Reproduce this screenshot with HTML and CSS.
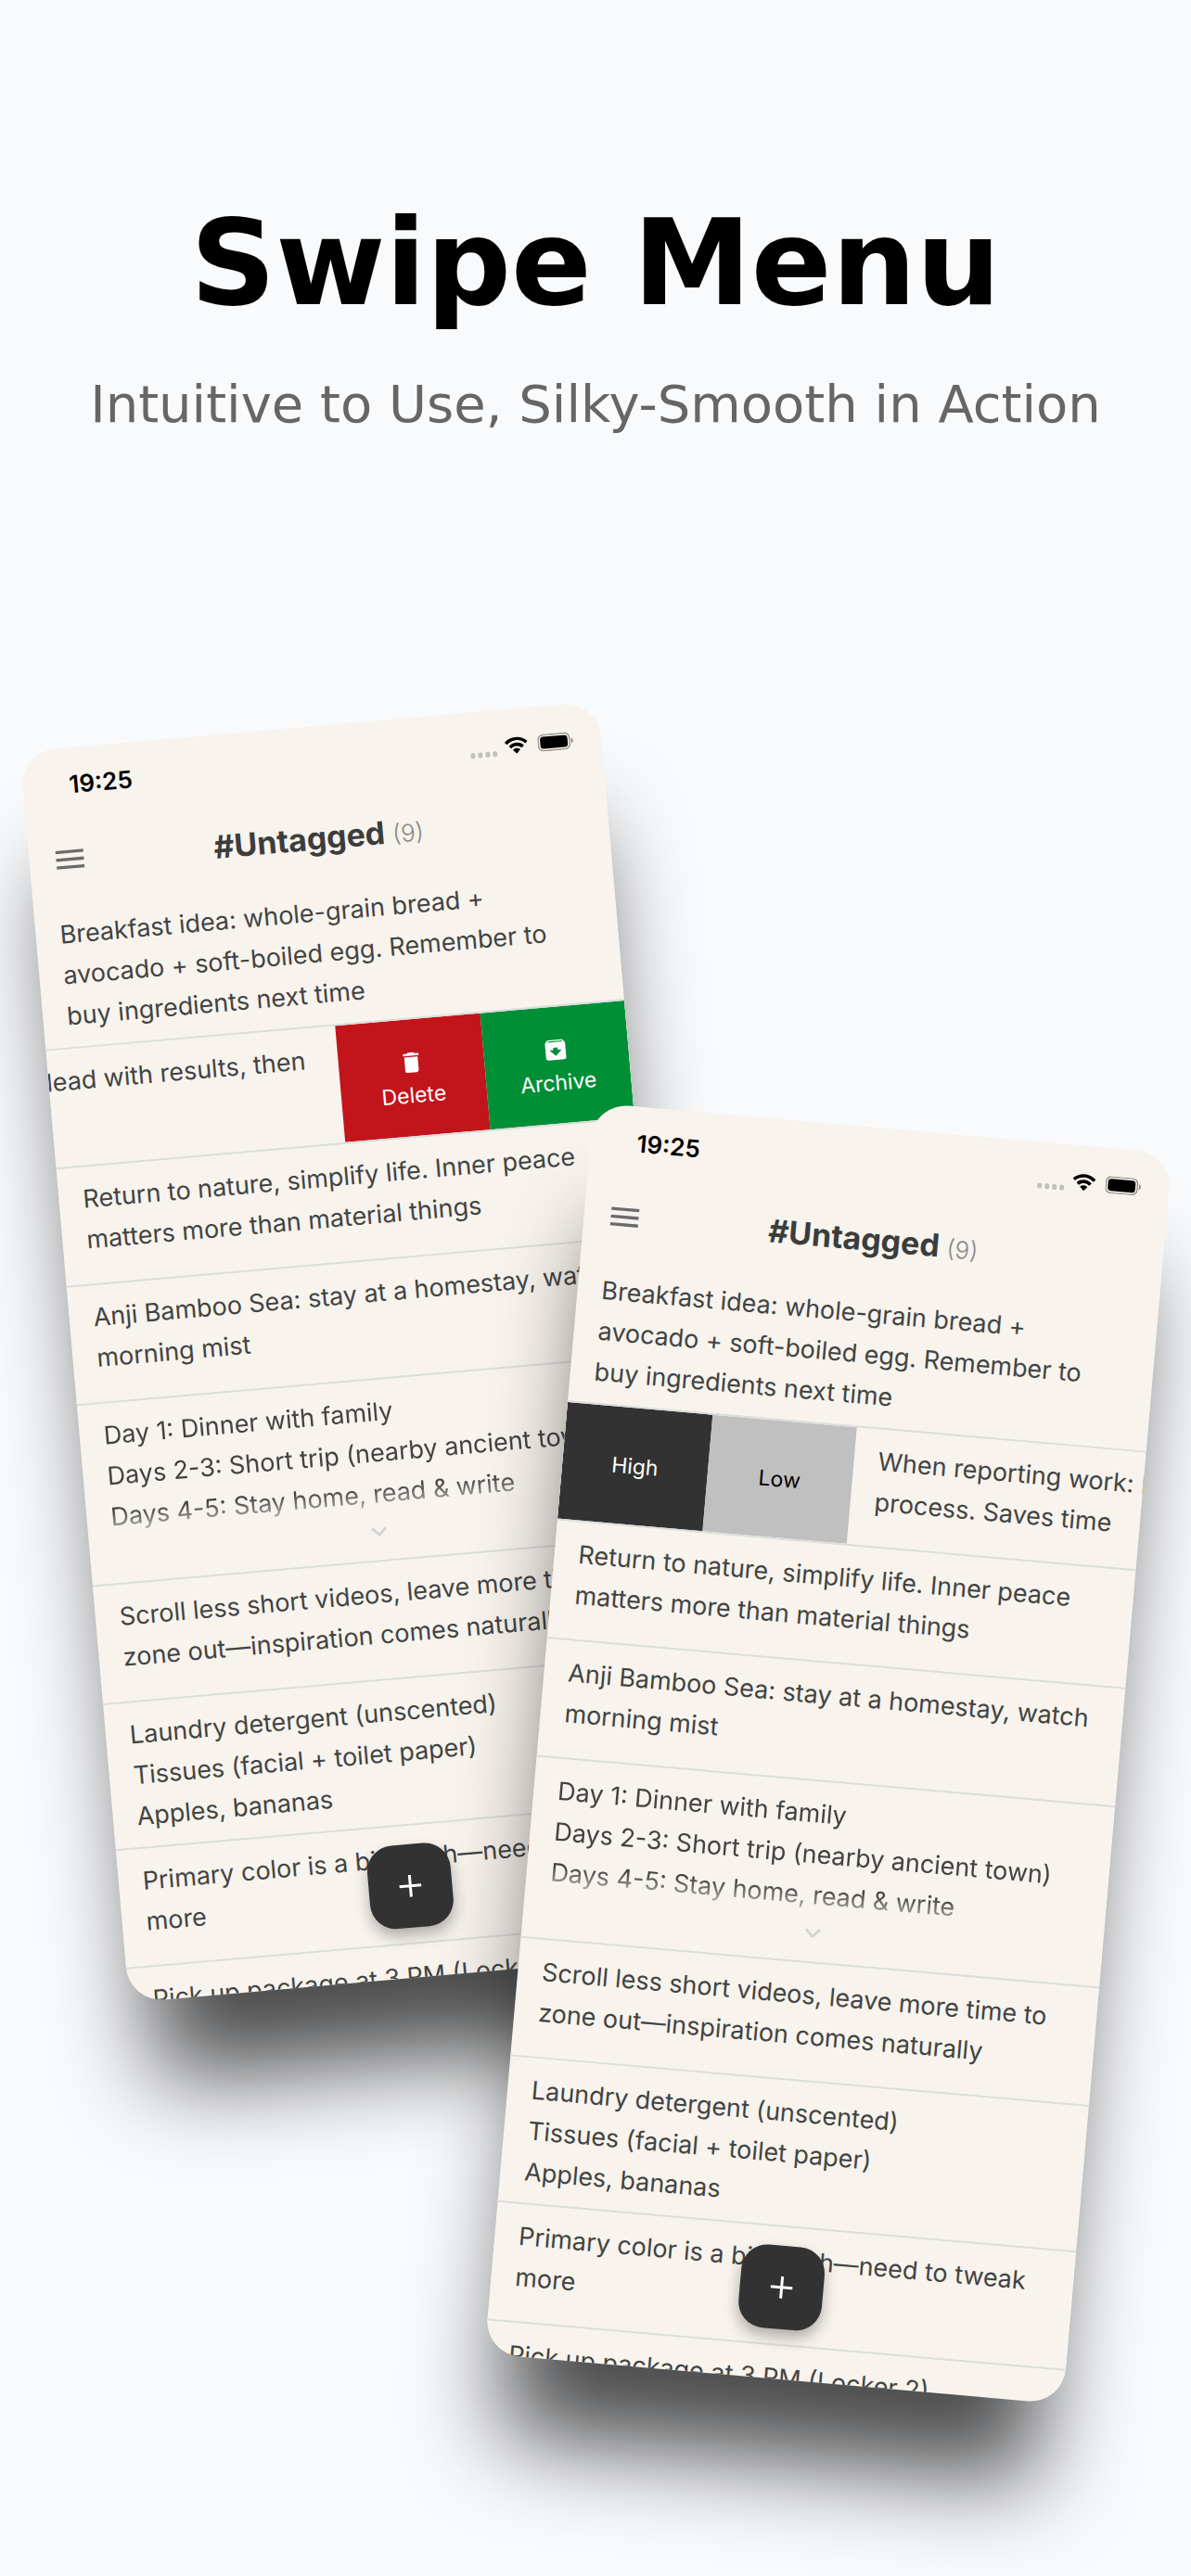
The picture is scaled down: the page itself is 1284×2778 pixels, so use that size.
FILE: index.html
```html
<!DOCTYPE html>
<html lang="en">

<head>
    <meta charset="UTF-8">
    <meta name="viewport" content="width=device-width, initial-scale=1.0">
    <title>Swipe Menu</title>
    <link rel="stylesheet" href="styles.css">
</head>

<body>

    <!-- shared icons -->
    <svg class="sprite" aria-hidden="true">
        <symbol id="icon-wifi" viewBox="0 0 17 12">
            <path d="M8.5 2.4c2.4 0 4.6.9 6.3 2.6.1.1.3.1.4 0l1.2-1.3c.1-.1.1-.3 0-.4C12-.9 5-.9.6 3.3c-.1.1-.1.3 0 .4L1.8 5c.1.1.3.1.4 0C3.9 3.3 6.1 2.4 8.5 2.4z" />
            <path d="M8.5 6.5c1.3 0 2.6.5 3.5 1.4.1.1.3.1.4 0l1.3-1.3c.1-.1.1-.3 0-.4-2.9-2.7-7.4-2.7-10.3 0-.1.1-.1.3 0 .4l1.2 1.3c.1.1.3.1.4 0 1-.9 2.2-1.4 3.5-1.4z" />
            <path d="M11 9.3c.1-.1.1-.3 0-.4-1.4-1.2-3.6-1.2-5 0-.1.1-.1.3 0 .4l2.3 2.4c.1.1.3.1.4 0z" />
        </symbol>
        <symbol id="icon-battery" viewBox="0 0 27 13">
            <rect x=".5" y=".5" width="23.5" height="12" rx="3.8" fill="none" stroke="#000" stroke-opacity=".4" />
            <rect x="2" y="2" width="20.5" height="9" rx="2.5" />
            <path d="M25.2 4.4v4.2c.8-.4 1.4-1.2 1.4-2.1s-.6-1.8-1.4-2.1z" opacity=".45" />
        </symbol>
        <symbol id="icon-menu" viewBox="0 0 24 24">
            <path d="M3 18h18v-2H3v2zm0-5h18v-2H3v2zm0-7v2h18V6H3z" />
        </symbol>
        <symbol id="icon-delete" viewBox="0 0 24 24">
            <path d="M6 19c0 1.1.9 2 2 2h8c1.1 0 2-.9 2-2V7H6v12zM19 4h-3.5l-1-1h-5l-1 1H5v2h14V4z" />
        </symbol>
        <symbol id="icon-archive" viewBox="0 0 24 24">
            <path d="M20.54 5.23l-1.39-1.68C18.88 3.21 18.47 3 18 3H6c-.47 0-.88.21-1.16.55L3.46 5.23C3.17 5.57 3 6.02 3 6.5V19c0 1.1.9 2 2 2h14c1.1 0 2-.9 2-2V6.5c0-.48-.17-.93-.46-1.27zM12 17.5L6.5 12H10v-2h4v2h3.5L12 17.5zM5.12 5l.81-1h12l.94 1H5.12z" />
        </symbol>
        <symbol id="icon-down" viewBox="0 0 18 11">
            <path d="M1.5 1.5L9 9l7.5-7.5" fill="none" stroke="currentColor" stroke-width="2.8" />
        </symbol>
        <symbol id="icon-plus" viewBox="0 0 24 24">
            <path d="M12 0v24M0 12h24" fill="none" stroke="currentColor" stroke-width="3" />
        </symbol>
    </svg>

    <header class="intro">
        <h1 class="intro-title">Swipe Menu</h1>
        <p class="intro-text">Intuitive to Use, Silky-Smooth in Action</p>
    </header>

    <main class="stage">

        <!-- swiped to the left: delete and archive -->
        <section class="phone phone-left">
            <div class="status">
                <span class="status-time">19:25</span>
                <span class="status-dots"><i></i><i></i><i></i><i></i></span>
                <svg class="status-wifi"><use href="#icon-wifi" /></svg>
                <svg class="status-battery"><use href="#icon-battery" /></svg>
            </div>
            <div class="nav">
                <button class="nav-menu" type="button" aria-label="Menu"><svg><use href="#icon-menu" /></svg></button>
                <h2 class="nav-title">#Untagged <span class="nav-count">(9)</span></h2>
            </div>
            <ul class="notes">
                <li class="row"><p class="note">Breakfast idea: whole-grain bread +<br>avocado + soft-boiled egg. Remember to buy ingredients next time</p></li>
                <li class="row row-end">
                    <p class="note">When reporting work: lead with results, then process. Saves time</p>
                    <button class="action action-delete" type="button"><svg><use href="#icon-delete" /></svg>Delete</button>
                    <button class="action action-archive" type="button"><svg><use href="#icon-archive" /></svg>Archive</button>
                </li>
                <li class="row"><p class="note">Return to nature, simplify life. Inner peace matters more than material things</p></li>
                <li class="row"><p class="note">Anji Bamboo Sea: stay at a homestay, watch morning mist</p></li>
                <li class="row row-folded">
                    <p class="note">Day 1: Dinner with family<br>Days 2-3: Short trip (nearby ancient town)<br>Days 4-5: Stay home, read &amp; write</p>
                    <svg class="more"><use href="#icon-down" /></svg>
                </li>
                <li class="row"><p class="note">Scroll less short videos, leave more time to zone out—inspiration comes naturally</p></li>
                <li class="row"><p class="note">Laundry detergent (unscented)<br>Tissues (facial + toilet paper)<br>Apples, bananas</p></li>
                <li class="row"><p class="note">Primary color is a bit harsh—need to tweak more</p></li>
                <li class="row"><p class="note">Pick up package at 3 PM (Locker 2)</p></li>
            </ul>
            <button class="add" type="button" aria-label="Add note"><svg><use href="#icon-plus" /></svg></button>
        </section>

        <!-- swiped to the right: priority -->
        <section class="phone phone-right">
            <div class="status">
                <span class="status-time">19:25</span>
                <span class="status-dots"><i></i><i></i><i></i><i></i></span>
                <svg class="status-wifi"><use href="#icon-wifi" /></svg>
                <svg class="status-battery"><use href="#icon-battery" /></svg>
            </div>
            <div class="nav">
                <button class="nav-menu" type="button" aria-label="Menu"><svg><use href="#icon-menu" /></svg></button>
                <h2 class="nav-title">#Untagged <span class="nav-count">(9)</span></h2>
            </div>
            <ul class="notes">
                <li class="row"><p class="note">Breakfast idea: whole-grain bread +<br>avocado + soft-boiled egg. Remember to buy ingredients next time</p></li>
                <li class="row">
                    <button class="action action-high" type="button">High</button>
                    <button class="action action-low" type="button">Low</button>
                    <p class="note">When reporting work: lead with results, then process. Saves time</p>
                </li>
                <li class="row"><p class="note">Return to nature, simplify life. Inner peace matters more than material things</p></li>
                <li class="row"><p class="note">Anji Bamboo Sea: stay at a homestay, watch morning mist</p></li>
                <li class="row row-folded">
                    <p class="note">Day 1: Dinner with family<br>Days 2-3: Short trip (nearby ancient town)<br>Days 4-5: Stay home, read &amp; write</p>
                    <svg class="more"><use href="#icon-down" /></svg>
                </li>
                <li class="row"><p class="note">Scroll less short videos, leave more time to zone out—inspiration comes naturally</p></li>
                <li class="row"><p class="note">Laundry detergent (unscented)<br>Tissues (facial + toilet paper)<br>Apples, bananas</p></li>
                <li class="row"><p class="note">Primary color is a bit harsh—need to tweak more</p></li>
                <li class="row"><p class="note">Pick up package at 3 PM (Locker 2)</p></li>
            </ul>
            <button class="add" type="button" aria-label="Add note"><svg><use href="#icon-plus" /></svg></button>
        </section>

    </main>

</body>

</html>
```

FILE: styles.css
```css
* {
    margin: 0;
    padding: 0;
    box-sizing: border-box;
}

body {
    min-height: 100vh;
    overflow-x: hidden;
    background-color: #f9fafc;
    color: #424443;
    font-family: Inter, "Liberation Sans", sans-serif;
    font-size: 26px;
}

ul {
    list-style: none;
}

button {
    border: 0;
    background: none;
    color: inherit;
    font: inherit;
}

svg {
    display: block;
    fill: currentColor;
}

.sprite {
    position: absolute;
    width: 0;
    height: 0;
}

/* heading */
.intro {
    padding-top: 208px;
    text-align: center;
    font-family: "DejaVu Sans", sans-serif;
}

.intro-title {
    color: #000;
    font-size: 128px;
    line-height: 152px;
}

.intro-text {
    margin-top: 40px;
    color: #666;
    font-size: 56px;
    line-height: 72px;
}

/* the two phones overlap */
.stage {
    display: flex;
    justify-content: center;
    align-items: flex-start;
    padding: 309px 0 209px;
}

.phone {
    display: flex;
    flex-direction: column;
    flex: none;
    position: relative;
    width: 626px;
    aspect-ratio: 313 / 677;
    border-radius: 38px;
    background-color: #f8f3ed;
    box-shadow: 0 110px 100px -25px rgba(0, 0, 0, 0.7);
}

.phone-left {
    transform: rotate(-5deg);
}

.phone-right {
    margin-top: 433px;
    margin-left: -125px;
    transform: rotate(5deg);
}

/* status bar */
.status {
    display: flex;
    align-items: center;
    flex: none;
    height: 78px;
    padding: 0 30px 0 50px;
    color: #000;
}

.status-time {
    font-weight: 600;
}

.status-dots {
    display: flex;
    gap: 3px;
    margin: 16px 8px 0 auto;
}

.status-dots i {
    width: 5px;
    height: 6px;
    border-radius: 2px;
    background-color: #c3c0bc;
}

.status-wifi {
    width: 26px;
    height: 19px;
    margin-right: 10px;
}

.status-battery {
    width: 39px;
    height: 19px;
}

/* nav bar */
.nav {
    display: grid;
    grid-template-columns: 40px 1fr 40px;
    align-items: center;
    flex: none;
    height: 88px;
    padding: 0 24px 4px;
}

.nav-menu {
    color: #6b6b6b;
}

.nav-menu svg {
    width: 40px;
    height: 40px;
}

.nav-title {
    color: #3b3d3c;
    text-align: center;
    font-size: 34px;
    font-weight: 700;
}

.nav-count {
    color: #8a8a8a;
    font-size: 26px;
    font-weight: 300;
}

/* note list */
.notes {
    flex: 1;
    min-height: 0;
    overflow: hidden;
    border-radius: 0 0 38px 38px;
}

.row {
    display: flex;
    min-height: 128px;
    overflow: hidden;
    border-bottom: 2px solid #dcdedc;
}

.row-end {
    justify-content: flex-end;
}

.row-folded {
    flex-direction: column;
    min-height: 196px;
}

.note {
    flex: none;
    width: 100%;
    padding: 13px 26px 11px;
    font-size: 27px;
    line-height: 44px;
}

.row-folded .note {
    -webkit-mask-image: linear-gradient(#000 74%, transparent 98%);
    mask-image: linear-gradient(#000 74%, transparent 98%);
}

.more {
    width: 18px;
    height: 11px;
    margin: 2px auto 0;
    color: #d3d3d3;
}

/* swipe buttons */
.action {
    display: flex;
    flex-direction: column;
    flex: 0 0 25%;
    align-items: center;
    justify-content: center;
    gap: 8px;
    color: #fff;
    font-size: 23px;
    line-height: 26px;
}

.action svg {
    width: 29px;
    height: 29px;
}

.action-delete {
    background-color: #c1151b;
}

.action-archive {
    background-color: #008f37;
}

.action-high {
    background-color: #323232;
}

.action-low {
    background-color: #c0c0c0;
    color: #000;
}

/* floating button */
.add {
    display: grid;
    place-items: center;
    position: absolute;
    bottom: 54px;
    left: calc(50% - 45px);
    width: 90px;
    height: 90px;
    border-radius: 28px;
    background-color: #323232;
    box-shadow: 0 8px 16px rgba(0, 0, 0, 0.3);
    color: #fff;
}

.add svg {
    width: 24px;
    height: 24px;
}
```
